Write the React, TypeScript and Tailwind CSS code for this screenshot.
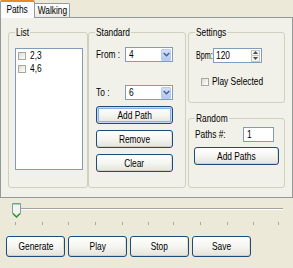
import React from "react";

const font = "font-['Liberation_Sans',Arial,sans-serif]";

function T({ children, center = false, narrow = false }: { children: React.ReactNode; center?: boolean; narrow?: boolean }) {
  return (
    <span
      className={`inline-block whitespace-nowrap text-[11px] leading-none ${narrow ? "scale-x-[0.65]" : "scale-x-[0.76]"} ${center ? "origin-center" : "origin-left"}`}
    >
      {children}
    </span>
  );
}

function XPButton({ label, className = "", focused = false }: { label: string; className?: string; focused?: boolean }) {
  return (
    <div
      className={`flex items-center justify-center rounded-[3px] border border-[#1C4C7C] bg-gradient-to-b from-[#FFFFFF] via-[#F5F5F1] to-[#E4E3DB] text-black ${focused ? "shadow-[inset_0_0_0_1px_#C4D9F5,inset_0_0_0_2px_#8FB0E6]" : "shadow-[inset_0_-1px_0_#D6D0C5,inset_-1px_0_0_#E2DED3]"} ${className}`}
    >
      <T center>{label}</T>
    </div>
  );
}

function Combo({ value }: { value: string }) {
  return (
    <div className="flex h-[15px] w-[48px] items-center border border-[#7F9DB9] bg-white">
      <span className="block flex-1 pl-[3px]">
        <T>{value}</T>
      </span>
      <div className="mr-[1px] flex h-[12px] w-[10px] items-center justify-center rounded-[1px] border border-[#B9CBF3] bg-gradient-to-b from-[#D2DFFC] to-[#B4C8F4]">
        <svg width="7" height="5" viewBox="0 0 7 5">
          <path d="M0.7 1 L3.5 3.8 L6.3 1" stroke="#4D6185" strokeWidth="1.5" fill="none" />
        </svg>
      </div>
    </div>
  );
}

function SmallCheck({ className = "" }: { className?: string }) {
  return <div className={`h-[8px] w-[8px] border border-[#A8A89C] bg-gradient-to-br from-[#DDDDD6] to-[#FFFFFF] ${className}`} />;
}

function Group({ title, lw, className = "", children }: { title: string; lw: number; className?: string; children?: React.ReactNode }) {
  return (
    <fieldset className={`rounded-[3px] border border-[#D0D0BF] ${className}`}>
      <legend className="ml-[6px] h-[13px] px-[1px] leading-[13px]" style={{ width: lw }}>
        <span className="inline-block origin-left scale-x-[0.76] whitespace-nowrap text-[11px] leading-[13px]">{title}</span>
      </legend>
      {children}
    </fieldset>
  );
}

export default function App() {
  const ticks = [15, 42, 68, 95, 122, 148, 173, 200, 227, 253, 278];
  return (
    <div className={`relative h-[268px] w-[293px] overflow-hidden bg-[#ECE9D8] text-[11px] leading-none text-black ${font}`}>
      {/* Tabs */}
      <div className="flex h-[17px] items-end">
        <div className="relative z-10 -mb-[1px] flex h-[18px] w-[35px] items-center justify-center rounded-t-[2px] border-x border-[#919B9C] border-t-[2px] border-t-[#E68B2C] bg-[#FCFCFE] pb-[1px]">
          <T center>Paths</T>
        </div>
        <div className="flex h-[14px] w-[35px] items-center justify-center rounded-tr-[2px] border-r border-t border-[#919B9C] bg-gradient-to-b from-white to-[#ECEBE5]">
          <T center>Walking</T>
        </div>
      </div>
      {/* Tab page */}
      <div className="h-[181px] w-[293px] border border-[#919B9C] bg-[#F1F0E9] pl-[7px] pt-[8px]">
        <div className="flex">
          <Group title="List" lw={15} className="h-[162px] w-[80px]">
            <div className="ml-[6px] mt-[9px] h-[122px] w-[68px] border border-[#7F9DB9] bg-white">
              <div className="flex h-[13px] items-center">
                <SmallCheck className="ml-[2px]" />
                <span className="ml-[4px] block"><T>2,3</T></span>
              </div>
              <div className="flex h-[13px] items-center">
                <SmallCheck className="ml-[2px]" />
                <span className="ml-[4px] block"><T>4,6</T></span>
              </div>
            </div>
          </Group>
          <Group title="Standard" lw={36} className="h-[162px] w-[98px]">
            <div className="ml-[7px] mt-[8px] flex items-center">
              <span className="block w-[29px]"><T>From :</T></span>
              <Combo value="4" />
            </div>
            <div className="ml-[7px] mt-[23px] flex items-center">
              <span className="block w-[29px]"><T>To :</T></span>
              <Combo value="6" />
            </div>
            <div className="ml-[7px] mt-[6px] flex flex-col gap-[6px]">
              <XPButton label="Add Path" focused className="h-[18px] w-[77px]" />
              <XPButton label="Remove" className="h-[18px] w-[77px]" />
              <XPButton label="Clear" className="h-[18px] w-[77px]" />
            </div>
          </Group>
          <div className="ml-[2px] flex flex-col gap-[9px]">
            <Group title="Settings" lw={32} className="h-[77px] w-[97px]">
              <div className="ml-[7px] mt-[9px] flex items-center">
                <span className="block w-[17px]"><T narrow>Bpm:</T></span>
                <div className="flex h-[15px] w-[49px] items-center border border-[#7F9DB9] bg-white">
                  <span className="block flex-1 pl-[2px]"><T>120</T></span>
                  <div className="mr-[1px] flex flex-col">
                    <div className="flex h-[6px] w-[9px] items-center justify-center border border-[#C8C8BE] bg-[#F4F4EF]">
                      <svg width="5" height="3" viewBox="0 0 5 3"><path d="M0 3 L2.5 0 L5 3Z" fill="#3E4A5E" /></svg>
                    </div>
                    <div className="flex h-[6px] w-[9px] items-center justify-center border border-t-0 border-[#C8C8BE] bg-[#F4F4EF]">
                      <svg width="5" height="3" viewBox="0 0 5 3"><path d="M0 0 L2.5 3 L5 0Z" fill="#3E4A5E" /></svg>
                    </div>
                  </div>
                </div>
              </div>
              <div className="ml-[12px] mt-[12px] flex h-[13px] items-center">
                <SmallCheck />
                <span className="ml-[3px] block"><T>Play Selected</T></span>
              </div>
            </Group>
            <Group title="Random" lw={34} className="h-[76px] w-[97px]">
              <div className="ml-[6px] mt-[2px] flex items-center">
                <span className="block w-[48px]"><T>Paths #:</T></span>
                <div className="flex h-[15px] w-[31px] items-center border border-[#7F9DB9] bg-white pl-[3px]">
                  <T>1</T>
                </div>
              </div>
              <XPButton label="Add Paths" className="ml-[5px] mt-[5px] h-[18px] w-[85px]" />
            </Group>
          </div>
        </div>
      </div>
      {/* Slider */}
      <div className="relative h-[38px]">
        <div className="absolute left-[15px] top-[10px] h-[2px] w-[268px] border-t border-[#A4A39E] bg-white" />
        <svg className="absolute left-[11px] top-[4px]" width="11" height="17" viewBox="0 0 11 17">
          <path d="M1.5 1.5 H9.5 V11.5 L5.5 15.5 L1.5 11.5 Z" fill="#F4F3EE" stroke="#7F9DB9" />
          <path d="M2 11.5 L5.5 15 L9 11.5" stroke="#21A121" strokeWidth="1.5" fill="none" />
          <path d="M2 2 H9" stroke="#55B655" />
        </svg>
        {ticks.map((x) => (
          <div key={x} className="absolute top-[24px] h-[3px] w-[1px] bg-[#A7A6AA]" style={{ left: x }} />
        ))}
      </div>
      {/* Bottom buttons */}
      <div className="ml-[6px] flex gap-[3px]">
        <XPButton label="Generate" className="h-[21px] w-[59px]" />
        <XPButton label="Play" className="h-[21px] w-[59px]" />
        <XPButton label="Stop" className="h-[21px] w-[59px]" />
        <XPButton label="Save" className="h-[21px] w-[59px]" />
      </div>
    </div>
  );
}
